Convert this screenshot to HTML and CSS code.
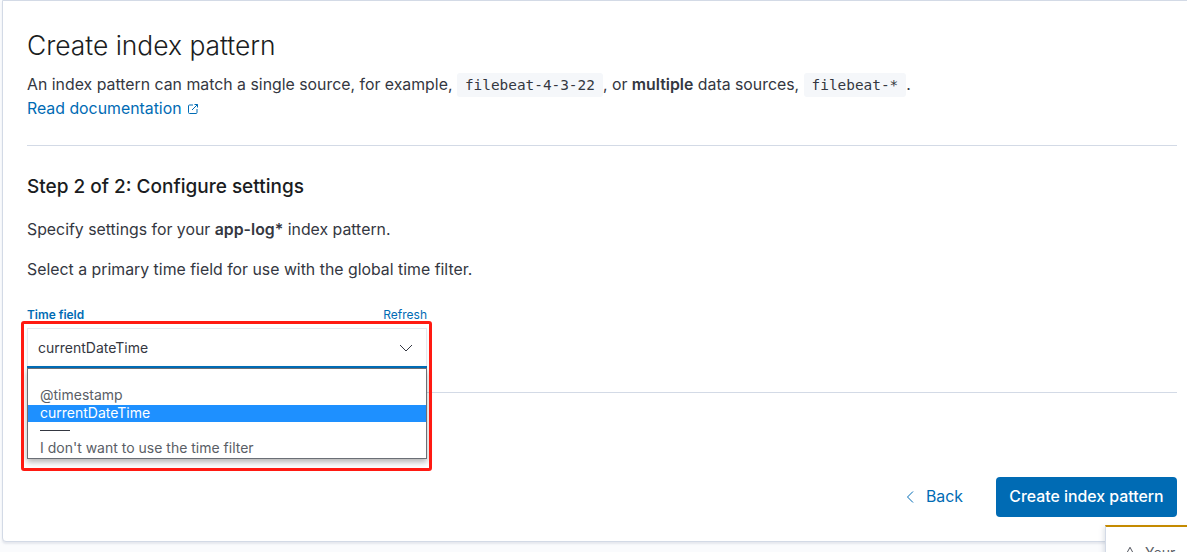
FILE: index.html
```html
<!DOCTYPE html>
<html lang="en">
<head>
<meta charset="utf-8">
<title>Create index pattern</title>
<link rel="stylesheet" href="styles.css">
</head>
<body>
<main class="panel">
  <h1 class="title">Create index pattern</h1>
  <p class="intro">An index pattern can match a single source, for example, <code class="code">filebeat-4-3-22</code>, or <strong>multiple</strong> data sources, <code class="code">filebeat-*</code>.</p>
  <p class="doc"><a class="link" href="#">Read documentation<svg class="ext" width="12" height="12" viewBox="0 0 12 12" fill="none" stroke="currentColor" stroke-width="1"><path d="M6 2H2.500A1 1 0 0 0 1.500 3v6.500a1 1 0 0 0 1 1H9a1 1 0 0 0 1-1V6"/><path d="M5 7 10.500 1.500M7.500 1.500h3v3"/></svg></a></p>
  <hr class="rule rule-top">
  <h2 class="step">Step 2 of 2: Configure settings</h2>
  <p class="text">Specify settings for your <strong>app-log*</strong> index pattern.</p>
  <p class="text text-second">Select a primary time field for use with the global time filter.</p>
  <div class="field">
    <div class="field-head"><span class="field-label">Time field</span><a class="refresh" href="#">Refresh</a></div>
    <div class="select"><span>currentDateTime</span><svg width="14" height="8" viewBox="0 0 14 8" fill="none" stroke="#343741" stroke-width="1"><path d="M1 1l6 6 6-6"/></svg></div>
    <ul class="options">
      <li class="option row-tall"></li>
      <li class="option row-tall">@timestamp</li>
      <li class="option selected">currentDateTime</li>
      <li class="option sep"><span class="sep-line"></span></li>
      <li class="option row-last">I don't want to use the time filter</li>
    </ul>
    <div class="highlight"></div>
  </div>
  <hr class="rule">
  <div class="actions">
    <a class="back" href="#"><svg width="8" height="12" viewBox="0 0 8 12" fill="none" stroke="currentColor" stroke-width="1"><path d="M7 .5 1.500 6 7 11.500"/></svg><span>Back</span></a>
    <button class="primary" type="button">Create index pattern</button>
  </div>
</main>
<aside class="toast"><svg class="toast-icon" width="12" height="12" viewBox="0 0 14 14" fill="none" stroke="#343741" stroke-width="1"><path d="M7 1.500 13 12.500H1z"/></svg><span>Your</span></aside>
</body>
</html>
```
FILE: styles.css
```css
* { box-sizing: border-box; }
html, body { margin: 0; height: 552px; overflow: hidden; }
body {
  position: relative;
  width: 1187px;
  background: #fafbfd;
  font-family: Inter, "Liberation Sans", sans-serif;
  color: #343741;
  font-size: 15.85px;
}
.panel {
  width: 1200px;
  height: 542px;
  margin-left: 2px;
  padding: 28px 24px 0;
  background: #fff;
  border: 1px solid #d3dae6;
  border-radius: 0 0 4px 4px;
  box-shadow: 0 2px 2px rgba(152,162,179,.2);
}
.title { margin: 0; font-size: 26.4px; line-height: 32px; font-weight: 300; color: #1a1c21; }
.intro { margin: 12px 0 0; height: 24px; line-height: 24px; }
.code {
  display: inline-block;
  padding: 0 8px;
  background: #f5f7fa;
  font-family: "DejaVu Sans Mono", "Liberation Mono", monospace;
  font-size: 14.4px;
  line-height: 24px;
  color: #343741;
  border-radius: 3px;
}
.intro strong, .text strong { font-weight: 600; }
.doc { margin: 0; line-height: 24px; }
.link { color: #006bb4; text-decoration: none; }
.ext { margin-left: 5px; vertical-align: -1px; }
.rule { border: 0; height: 1px; margin: 0; background: #d3dae6; }
.rule-top { margin-top: 24px; }
.step { margin: 27px 0 0; font-size: 19px; line-height: 28px; font-weight: 500; color: #1a1c21; }
.text { margin: 17px 0 0; line-height: 24px; }
.text-second { margin-top: 16px; }
.field { position: relative; width: 400px; margin-top: 24px; height: 86px; }
.field-head { display: flex; justify-content: space-between; align-items: baseline; height: 18px; line-height: 18px; }
.field-label { font-size: 11.9px; font-weight: 600; color: #006bb4; }
.refresh { font-size: 12px; color: #006bb4; text-decoration: none; }
.select {
  display: flex;
  align-items: center;
  justify-content: space-between;
  height: 38px;
  margin-top: 4px;
  padding: 0 13px 0 10px;
  font-size: 14px;
  background: #fff;
  border: 1px solid #e4e8f0;
  border-bottom: 0;
  box-shadow: 0 3px 6px rgba(0,0,0,.06);
}
.options {
  position: absolute;
  left: 0;
  top: 62px;
  width: 400px;
  margin: 0;
  padding: 0;
  list-style: none;
  background: #fff;
  border: 1px solid #6b6f76;
  box-shadow: 0 -2px 0 #006bb4, 0 3px 6px rgba(0,0,0,.3);
  font-size: 14px;
  line-height: 15px;
  color: #5a5e66;
}
.option { height: 17px; padding: 0 12px; white-space: nowrap; }
.row-tall { height: 18px; }
.row-last { height: 19px; padding-top: 1px; }
.selected { background: #1e90ff; color: #fff; }
.sep { display: flex; align-items: center; }
.sep-line { display: block; width: 30px; height: 1px; background: #343741; }
.highlight {
  position: absolute;
  left: -6px;
  top: 15px;
  width: 411px;
  height: 150px;
  border: 3px solid #ff1a12;
  border-radius: 3px;
}
.actions { display: flex; justify-content: flex-end; align-items: center; margin-top: 84px; }
.back { display: flex; align-items: center; gap: 12px; color: #006bb4; text-decoration: none; margin-right: 33px; padding-bottom: 1px; }
.primary {
  width: 181px;
  height: 40px;
  padding: 0 0 2px;
  border: 0;
  border-radius: 4px;
  background: #006bb4;
  color: #fff;
  font: 500 15.85px Inter, "Liberation Sans", sans-serif;
}
.toast {
  position: absolute;
  left: 1105px;
  top: 525px;
  width: 120px;
  height: 60px;
  padding: 17px 0 0 18px;
  display: flex;
  gap: 9px;
  background: #fff;
  border-top: 2px solid #c48a00;
  border-left: 1px solid #d3dae6;
  box-shadow: -2px 2px 4px rgba(152,162,179,.25);
  font-size: 14px;
  color: #5a5e66;
}
.toast-icon { margin-top: 2px; }
```
